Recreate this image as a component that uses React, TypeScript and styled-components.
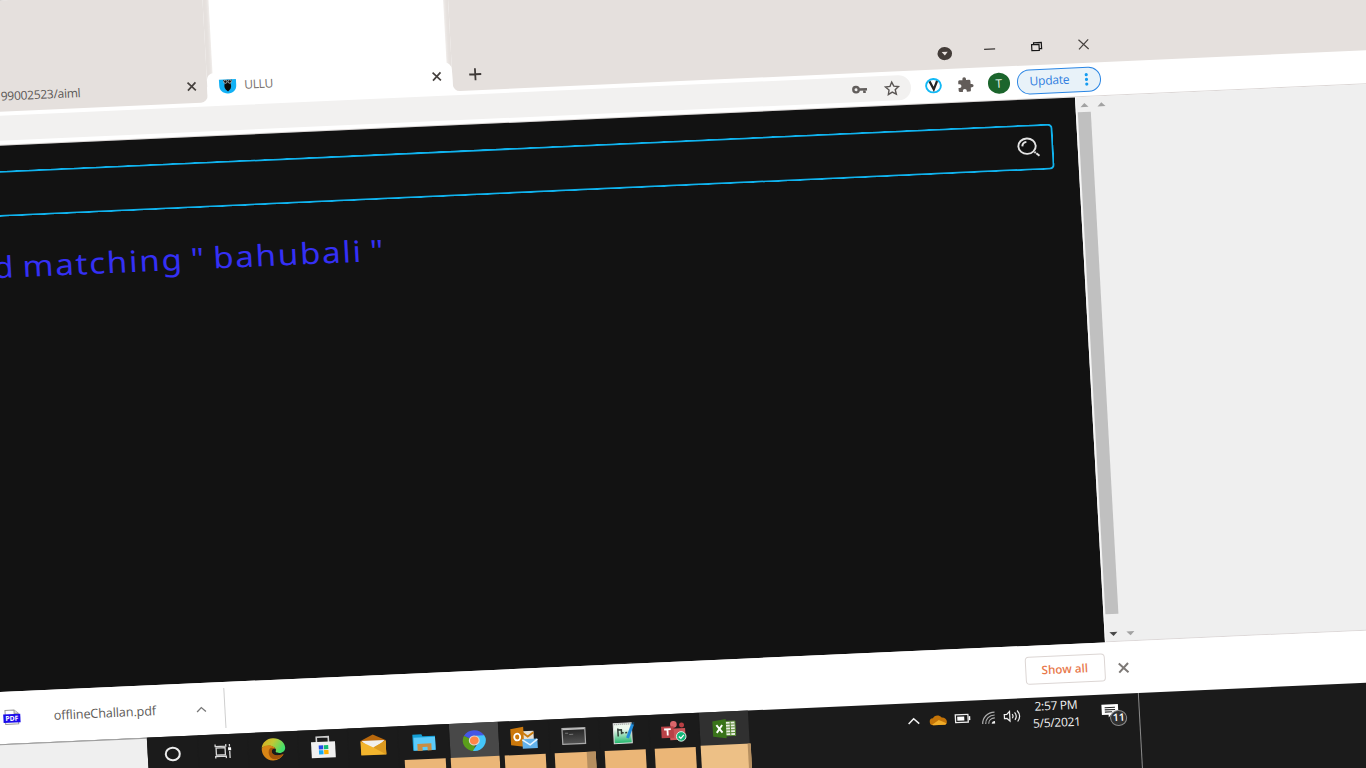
import React from "react";
import styled, { createGlobalStyle } from "styled-components";

const Global = createGlobalStyle`
  html, body { margin: 0; padding: 0; width: 100%; height: 768px; overflow: hidden; background: #1b1b1b; }
  svg { display: block; flex: none; overflow: visible; }
`;

const Viewport = styled.main`
  width: 1366px;
  height: 768px;
  overflow: hidden;
  font-family: "Open Sans", "Noto Sans", sans-serif;
`;

/* The whole desktop is tilted: rows climb to the right, columns lean right on the way down. */
const Desktop = styled.div`
  display: flex;
  flex-direction: column;
  width: 1450px;
  height: 850px;
  background: #fff;
  transform-origin: 0 0;
  transform: matrix(1, -0.045, 0.055, 1, -60, 3.1);
`;

const Cell = styled.div<{ $w: number }>`
  display: flex;
  flex: none;
  align-items: center;
  justify-content: center;
  width: ${(p) => p.$w}px;
`;

/* ---------- tab strip ---------- */
const TabStrip = styled.header`
  display: flex;
  flex: none;
  height: 111px;
  background: #fff;
`;

const IdleTab = styled.div`
  box-sizing: border-box;
  display: flex;
  align-items: flex-end;
  justify-content: flex-end;
  width: 262px;
  height: 111px;
  padding: 0 10.5px 2px 0;
  background: #e5e0dd;
  border-bottom-right-radius: 7px;
`;

const IdleTitle = styled.span`
  width: 75px;
  margin: 0 111px 4.5px 0;
  font-size: 12px;
  line-height: 18px;
  letter-spacing: -0.28px;
  color: #5a5654;
  white-space: nowrap;
`;

const ActiveColumn = styled.div`
  display: flex;
  flex-direction: column;
  width: 245px;
  background: linear-gradient(#e5e0dd 96px, #fff 96px);
`;

const Glow = styled.div`
  height: 94px;
  margin: 0 5.5px -12px 6px;
  background: #fff;
  box-shadow: 0 0 3px 1px #f4f1ef;
`;

const ActiveTab = styled.div`
  position: relative;
  box-sizing: border-box;
  display: flex;
  align-items: center;
  height: 29px;
  padding: 0 11.5px 2px 12px;
  background: #fff;
  border-radius: 7px 7px 0 0;
`;

const ActiveTitle = styled.span`
  flex: 1;
  margin: 0 0 1px 8px;
  font-size: 12px;
  line-height: 16px;
  letter-spacing: -0.3px;
  color: #77716e;
`;

const StripRest = styled.div`
  box-sizing: border-box;
  display: flex;
  flex: 1;
  align-items: flex-end;
  height: 111px;
  padding-bottom: 4px;
  background: #e5e0dd;
  border-bottom-left-radius: 7px;
`;

const StripCell = styled(Cell)<{ $lift?: number }>`
  height: 24px;
  margin-bottom: ${(p) => p.$lift ?? 0}px;
`;

/* ---------- toolbar ---------- */
const Toolbar = styled.div`
  box-sizing: border-box;
  display: flex;
  flex: none;
  align-items: center;
  height: 33.5px;
  border-bottom: 1px solid #dcd7d6;
`;

const Omnibox = styled.div`
  box-sizing: border-box;
  display: flex;
  align-items: center;
  justify-content: flex-end;
  gap: 17px;
  width: 963.5px;
  height: 25px;
  margin-right: 14px;
  padding-right: 11px;
  background: #f2f1f0;
  border-radius: 0 13px 13px 0;
`;

const PuzzleCell = styled(Cell)`
  box-sizing: border-box;
  padding-left: 3px;
`;

const Avatar = styled.div`
  display: flex;
  align-items: center;
  justify-content: center;
  width: 22.5px;
  height: 21px;
  margin-right: 6.5px;
  border-radius: 50%;
  background: #1b652c;
  color: #e8f4ea;
  font-size: 12px;
`;

const UpdateButton = styled.div`
  box-sizing: border-box;
  display: flex;
  align-items: center;
  justify-content: space-between;
  width: 84px;
  height: 25.5px;
  padding: 0 12px 0 12px;
  border: 1px solid #2b86e4;
  border-radius: 13px;
  background: #e8f2f9;
  color: #2f7de0;
  font-size: 12px;
  line-height: 16px;
  letter-spacing: -0.2px;
`;

/* ---------- page ---------- */
const Body = styled.section`
  box-sizing: border-box;
  display: flex;
  flex: none;
  height: 545.7px;
  background: #efefef;
  border-bottom: 1px solid #ddd8d8;
`;

const Page = styled.div`
  display: flex;
  flex-direction: column;
  width: 1127px;
  height: 545.7px;
  background: #121212;
`;

const SearchBox = styled.div`
  box-sizing: border-box;
  display: flex;
  align-items: center;
  justify-content: flex-end;
  width: 1103px;
  height: 46px;
  margin-top: 25.3px;
  padding-right: 12.5px;
  border: 2px solid #10b3ee;
  border-left: 0;
  border-radius: 0 5px 5px 0;
`;

const Message = styled.p`
  width: 430.5px;
  margin: 30.5px 0 0;
  color: #3530f5;
  font-family: "Noto Sans", sans-serif;
  font-size: 29.5px;
  line-height: 40px;
  letter-spacing: 1.5px;
  word-spacing: -2.8px;
  text-align: right;
  white-space: pre;
  transform: scaleX(1.125);
  transform-origin: 100% 50%;
`;

const ScrollTrack = styled.div`
  box-sizing: border-box;
  display: flex;
  flex-direction: column;
  align-items: center;
  justify-content: space-between;
  width: 17.5px;
  height: 545px;
  padding: 6px 0 5.5px;
`;

const InnerTrack = styled(ScrollTrack)`
  border-left: 1px solid #fafafa;
`;

const Thumb = styled.div`
  flex: 1;
  width: 13.3px;
  margin: 5px 1px 18.5px 0;
  background: #c0c0c0;
`;

/* ---------- downloads ---------- */
const Downloads = styled.div`
  display: flex;
  flex: none;
  align-items: center;
  height: 51.6px;
  background: #fff;
`;

const FileIcon = styled.div`
  margin-left: 23.5px;
`;

const FileName = styled.span`
  width: 104px;
  margin: 1px 0 0 34px;
  color: #5d5a58;
  font-size: 12.6px;
  line-height: 18px;
  letter-spacing: -0.1px;
  white-space: nowrap;
`;

const FileMenu = styled.div`
  margin: 2px 0 0 38px;
`;

const Divider = styled.div`
  width: 1px;
  height: 40px;
  margin-left: 18.5px;
  background: #cfcfcf;
`;

const ShowAll = styled.div`
  box-sizing: border-box;
  display: flex;
  align-items: center;
  justify-content: center;
  width: 80px;
  height: 28.5px;
  margin: 0 13px 2px 799.5px;
  border: 1px solid #dcd6d4;
  border-radius: 4px;
  color: #e8794c;
  font-size: 11.6px;
  font-weight: 600;
`;

/* ---------- taskbar ---------- */
const TaskRow = styled.div`
  display: flex;
  flex: 1;
  background: #1b1b1b;
`;

const Blank = styled.div`
  box-sizing: border-box;
  width: 166px;
  background: #efefef;
  border-top: 1px solid #9b9b9b;
`;

const Slot = styled.div<{ $bg?: string }>`
  box-sizing: border-box;
  display: flex;
  flex-direction: column;
  align-items: center;
  width: 50.1px;
  border-left: 1px solid #1b1b1b;
  background: linear-gradient(${(p) => p.$bg ?? "#1b1b1b"} 36px, #1b1b1b 36px);
`;

const SlotIcon = styled.div<{ $h?: number }>`
  display: flex;
  flex: none;
  align-items: center;
  justify-content: center;
  height: ${(p) => p.$h ?? 34.5}px;
`;

const Underline = styled.div<{ $w: number; $shade?: number; $c?: string }>`
  box-sizing: border-box;
  flex: 1;
  align-self: ${(p) => (p.$w > 45 ? "flex-start" : "center")};
  width: ${(p) => p.$w}px;
  margin-left: ${(p) => (p.$w > 45 ? 0 : 1)}px;
  border-right: ${(p) => p.$shade ?? 0}px solid #b68f60;
  background: ${(p) => p.$c ?? "#ebb677"};
`;

const Tray = styled.div`
  display: flex;
  align-items: center;
  height: 35.5px;
  margin-left: 154px;
`;

const Clock = styled.div`
  width: 55px;
  margin: 0 0 0 6px;
  color: #f2f2f2;
  font-size: 12px;
  line-height: 16.2px;
  letter-spacing: -0.3px;
  text-align: center;
  white-space: nowrap;
`;

const Notice = styled.div`
  position: relative;
  width: 24px;
  height: 22px;
  margin: 7px 0 0 18px;
`;

const Badge = styled.div`
  position: absolute;
  left: 8px;
  top: 6px;
  box-sizing: border-box;
  width: 17px;
  height: 15.5px;
  border: 1px solid #8a8a8a;
  border-radius: 50%;
  background: #303030;
  color: #fff;
  font-size: 10.5px;
  font-weight: 600;
  line-height: 13.5px;
  text-align: center;
`;

const DesktopEdge = styled.div`
  width: 1px;
  margin-left: 12.5px;
  background: #8b8b8b;
`;

const Cross = ({ s = 9, w = 1.7, c = "#46413e" }: { s?: number; w?: number; c?: string }) => (
  <svg width={s} height={s} viewBox="0 0 10 10" stroke={c} strokeWidth={(w * 10) / s}>
    <path d="M.6.6 9.4 9.4M9.4.6.6 9.4" />
  </svg>
);

const Arrow = ({ down, c = "#a2a2a2" }: { down?: boolean; c?: string }) => (
  <svg width="8" height="4" viewBox="0 0 8 4" fill={c}>
    <path d={down ? "M0 0h8L4 4z" : "M0 4h8L4 0z"} />
  </svg>
);

const Chevron = ({ c, w = 12 }: { c: string; w?: number }) => (
  <svg width={w} height={w / 2} viewBox="0 0 12 6" fill="none" stroke={c} strokeWidth="1.6">
    <path d="m.7 5.6 5.3-5 5.3 5" />
  </svg>
);

const Owl = () => (
  <svg width="17" height="14" viewBox="0 0 17 14">
    <path d="M0 0h17v6c0 5-3.500 8-8.500 8S0 11 0 6z" fill="#12b1f5" />
    <path d="M4 .5h9l-1.500 4c.8 2.300.2 4.500-1 5.700l-2 1.800-2-1.800C5.300 9 4.700 6.800 5.500 4.500z" fill="#0b0b0b" />
    <g fill="#111" stroke="#bdc9cf" strokeWidth=".8">
      <circle cx="6.300" cy="2.200" r="1.700" />
      <circle cx="10.700" cy="2.200" r="1.700" />
    </g>
  </svg>
);

const Key = () => (
  <svg width="15" height="9" viewBox="0 0 15 9" fill="none" stroke="#625e5c">
    <circle cx="4" cy="4.500" r="2.700" strokeWidth="2.400" />
    <path d="M7 4.500h8M12.300 4.500v3.700" strokeWidth="2.600" />
  </svg>
);

const Star = () => (
  <svg width="16" height="15" viewBox="0 0 16 15" fill="none" stroke="#5a5654" strokeWidth="1.400">
    <path d="m8 1.500 1.900 4.200 4.600.5-3.400 3.100.9 4.500-4-2.300-4 2.300.9-4.500L1.500 6.200l4.600-.5z" />
  </svg>
);

const VIcon = () => (
  <svg width="17" height="16" viewBox="0 0 17 16" fill="none">
    <ellipse cx="8.500" cy="8" rx="7.400" ry="6.700" fill="#fff" stroke="#12b9f6" strokeWidth="1.900" />
    <path d="M4.800 3.500 8.600 11.600l3.700-8.100" stroke="#252525" strokeWidth="2.200" />
  </svg>
);

const Puzzle = () => (
  <svg width="15.500" height="14.500" viewBox="1.500 1 21.500 21" preserveAspectRatio="none" fill="#625c59">
    <path d="M20.500 11H19V7a2 2 0 0 0-2-2h-4V3.500a2.500 2.500 0 0 0-5 0V5H4a2 2 0 0 0-2 2v3.800h1.500a2.700 2.700 0 0 1 0 5.400H2V20a2 2 0 0 0 2 2h3.800v-1.500a2.700 2.700 0 0 1 5.400 0V22H17a2 2 0 0 0 2-2v-4h1.500a2.500 2.500 0 0 0 0-5z" />
  </svg>
);

const Magnifier = () => (
  <svg width="22" height="19" viewBox="0 0 22 19" fill="none" stroke="#e4e4e4">
    <ellipse cx="9.500" cy="8.500" rx="8.700" ry="7.700" strokeWidth="1.900" />
    <path d="M4.800 8.500c.2-2.400 2-4.100 4.300-4.300M16.600 14.600l1.200 1M18.400 16l3 2.600" strokeWidth="2" />
  </svg>
);

const Pdf = () => (
  <svg width="17" height="15" viewBox="0 0 17 15">
    <path d="M2 .5h9l4 3.500v10.500H2z" fill="#fff" stroke="#989898" />
    <path d="M11 .5V4h4" fill="#ddd" stroke="#989898" />
    <path d="M0 4.500h17v8.500H0z" fill="#1a0bea" />
    <text x="8.500" y="11.200" textAnchor="middle" fontSize="6.800" fontWeight="700" fill="#fff" fontFamily="Open Sans, sans-serif">PDF</text>
  </svg>
);

const TaskView = () => (
  <svg width="17" height="14" viewBox="0 0 17 14" fill="none" stroke="#dadada" strokeWidth="1.300">
    <path d="M1.500 3.500h9v7h-9zM.7 0v2h10.600V0M.7 14v-2h10.600v2M15 0v2.500M15 7v7" />
    <path d="M13.500 3.300h3v3h-3z" fill="#fff" stroke="none" />
  </svg>
);

const Edge = () => (
  <svg width="25" height="23" viewBox="0 0 26 24">
    <defs>
      <linearGradient id="edgeTop" x1="0" y1="0" x2="1" y2=".5">
        <stop offset="0" stopColor="#dfa619" />
        <stop offset=".5" stopColor="#c0c936" />
        <stop offset="1" stopColor="#43e06b" />
      </linearGradient>
    </defs>
    <path d="M1 10C2 4 7 .2 13 .2c7.500 0 12.500 5 12.500 10.300 0 3.500-3 5.500-6 5.500-3.500 0-5-1.500-3.500-3.200C15 8 7 6 1 10z" fill="url(#edgeTop)" />
    <path d="M1 10.500C4 6 13 6.500 15.500 11.500c-3-1.500-5 .5-4.500 3 .5 3.500 5 5.500 12.500 3C21 21.500 17 23.500 12.500 23.500 5 23.500.5 17 1 10.500z" fill="#d88515" />
    <path d="M8 15c0-4 3-6 6-4-2 .5-3 2-2.500 4 1 3 6 4.500 12 2-1.700 3.300-5 5.200-8.500 5.300C10.500 22.500 8 19 8 15z" fill="#a3540b" />
  </svg>
);

const Store = () => (
  <svg width="25" height="23" viewBox="0 0 25 23">
    <path d="M6 7V1.200h12V7" fill="none" stroke="#cfcfcf" strokeWidth="1.600" />
    <path d="M.5 6h24v16H.5z" fill="#f0f0f0" />
    <path d="M8 9.500h4.400v4.100H8z" fill="#244be8" />
    <path d="M13.100 9.500h4.400v4.100h-4.400z" fill="#12bb78" />
    <path d="M8 14.400h4.400v4.200H8z" fill="#16a9f3" />
    <path d="M13.100 14.400h4.400v4.200h-4.400z" fill="#ffb000" />
  </svg>
);

const Mail = () => (
  <svg width="25" height="21" viewBox="0 0 25 21">
    <path d="M0 6 12.500 0 25 6v14H0z" fill="#b9680c" />
    <path d="M1 6h23l-9 8H9z" fill="#f0efed" />
    <path d="M0 6.500 12.500 13 25 6.500V20.500H0z" fill="#f2b42d" />
    <path d="M25 6.500V20.500L12.500 13z" fill="#dc9a20" />
  </svg>
);

const Folder = () => (
  <svg width="23" height="17" viewBox="0 0 23 17">
    <path d="M0 0h9l1 2h12.500v14H0z" fill="#139ed5" />
    <path d="M1 3h21.500v13H1z" fill="#5ccbfa" />
    <path d="M4.500 16.500V9.500h14v7h-4v-3.800h-5v3.800z" fill="#c98d43" />
  </svg>
);

const Chrome = () => (
  <svg width="23" height="21" viewBox="0 0 24 24" preserveAspectRatio="none">
    <path d="M12 24A12 12 0 0 1 1.600 6L12 12z" fill="#5a9e1b" />
    <path d="M10 23.800 16.500 14 14 6h8.400A12 12 0 0 1 10 23.800z" fill="#44c6fa" />
    <path d="M12 12 1.600 6a12 12 0 0 1 20.800 0.500H12z" fill="#4557e5" />
    <circle cx="12" cy="12" r="5.700" fill="#e1d8d5" />
    <circle cx="12" cy="12" r="4.500" fill="#ff8547" />
  </svg>
);

const Outlook = () => (
  <svg width="27" height="22" viewBox="0 0 27 22">
    <path d="M12 4.500h11v9H12z" fill="#e5e0d7" />
    <path d="m12 6 5 4 6-4" fill="none" stroke="#ca7b0e" strokeWidth="1.800" />
    <path d="M0 2 13 0v20L0 18z" fill="#cb780b" />
    <ellipse cx="6.500" cy="10" rx="3" ry="3.400" fill="none" stroke="#fff" strokeWidth="1.800" />
    <path d="M11.500 12.500h15v9.500h-15z" fill="#62b1ea" />
    <path d="m11.500 13 7.500 5.500 7.500-5.500" fill="none" stroke="#e6f4ff" strokeWidth="1.500" />
  </svg>
);

const Terminal = () => (
  <svg width="24" height="17" viewBox="0 0 24 17">
    <defs>
      <linearGradient id="term" x1="0" y1="0" x2="0" y2="1">
        <stop offset="0" stopColor="#222" />
        <stop offset="1" stopColor="#535353" />
      </linearGradient>
    </defs>
    <path d="M.6.600h22.800v15.800H.600z" fill="url(#term)" stroke="#a9a9a9" strokeWidth="1.200" />
    <path d="M1 1.500h22" stroke="#c2c2c2" strokeWidth="1.400" />
    <path d="M3.500 5.500h3M7.500 6.800h4" stroke="#777" strokeWidth="1" />
  </svg>
);

const Note = () => (
  <svg width="23" height="22" viewBox="0 0 23 22">
    <defs>
      <linearGradient id="note" x1="0" y1="0" x2="0" y2="1">
        <stop offset=".3" stopColor="#edf8ee" />
        <stop offset="1" stopColor="#1db56a" />
      </linearGradient>
    </defs>
    <path d="M1 1h18v20H1z" fill="url(#note)" stroke="#ddd" />
    <path d="M2 2h17" stroke="#9c9c9c" strokeWidth="1.300" strokeDasharray="1 1" />
    <path d="M5.300 6v8M5.300 7.500h3.500V12M8.500 10.500h2.500M12.500 10.500h2" fill="none" stroke="#2e3d35" strokeWidth="1.500" />
    <path d="M20.500 2 14.500 16" stroke="#218cdb" strokeWidth="3" />
    <path d="m21.500.3-1.200 2.400" stroke="#173c55" strokeWidth="2" />
  </svg>
);

const Teams = () => (
  <svg width="26" height="21" viewBox="0 0 26 22">
    <circle cx="13" cy="3.500" r="3.500" fill="#d9666a" />
    <circle cx="21.500" cy="4.500" r="2.600" fill="#b93f43" />
    <path d="M8 8h17v6c0 4-2 6-6 6H9z" fill="#cc5558" />
    <path d="M0 5.500h13v12H0z" fill="#b94247" />
    <path d="M3 8.500h7M6.500 8.500V15" stroke="#fff" strokeWidth="1.900" />
    <circle cx="20.500" cy="16.500" r="5" fill="#12b778" stroke="#e3eee8" strokeWidth="1" />
    <path d="m18 16.500 2 2 3.300-3.500" fill="none" stroke="#fff" strokeWidth="1.300" />
  </svg>
);

const Excel = () => (
  <svg width="23" height="20" viewBox="0 0 24 20">
    <path d="M13 2.500h10.500v15H13z" fill="#e9efe4" stroke="#50852c" />
    <path d="M14 5.500h9M14 8.500h9M14 11.500h9M14 14.500h9M18.500 3v14" stroke="#55832f" strokeWidth="1" />
    <path d="M0 2 14 0v20L0 18z" fill="#39731a" />
    <path d="m4 6 6 8M10 6l-6 8" stroke="#fff" strokeWidth="2" />
  </svg>
);

const Cortana = () => (
  <svg width="18" height="15" viewBox="0 0 18 15">
    <ellipse cx="8" cy="7.500" rx="7" ry="6.200" fill="none" stroke="#ececec" strokeWidth="2" />
  </svg>
);

const apps: { icon: React.ReactNode; bar?: number; shade?: number; bg?: string; tall?: boolean }[] = [
  { icon: <Cortana /> },
  { icon: <TaskView /> },
  { icon: <Edge /> },
  { icon: <Store /> },
  { icon: <Mail /> },
  { icon: <Folder />, bar: 41 },
  { icon: <Chrome />, bar: 49.5, bg: "#484848" },
  { icon: <Outlook />, bar: 41 },
  { icon: <Terminal />, bar: 41, shade: 9 },
  { icon: <Note />, bar: 41 },
  { icon: <Teams />, bar: 41 },
  { icon: <Excel />, bar: 50, shade: 3, bg: "#303030", tall: true },
];

export default function App() {
  return (
    <Viewport>
      <Global />
      <Desktop>
        <TabStrip>
          <IdleTab>
            <IdleTitle>99002523/aiml</IdleTitle>
            <StripCell $w={10} $lift={2.3}><Cross /></StripCell>
          </IdleTab>
          <ActiveColumn>
            <Glow />
            <ActiveTab>
              <Owl />
              <ActiveTitle>ULLU</ActiveTitle>
              <Cross />
            </ActiveTab>
          </ActiveColumn>
          <StripRest>
            <StripCell $w={45.5}>
              <svg width="12" height="12" viewBox="0 0 12 12" stroke="#3f3a38" strokeWidth="1.800"><path d="M6 0v12M0 6h12" /></svg>
            </StripCell>
            <StripCell $w={423.5} />
            <StripCell $w={46}>
              <svg width="15" height="13" viewBox="0 0 15 13"><ellipse cx="7.500" cy="6.500" rx="7.300" ry="6.500" fill="#433c38" /><path d="M4.500 4.800h6l-3 3.700z" fill="#e9e3df" /></svg>
            </StripCell>
            <StripCell $w={44} $lift={2}>
              <svg width="11" height="2" viewBox="0 0 11 2"><path d="M0 1h11" stroke="#3b3735" strokeWidth="1.300" /></svg>
            </StripCell>
            <StripCell $w={50} $lift={3}>
              <svg width="11" height="9" viewBox="0 0 11 9" fill="none" stroke="#161616" strokeWidth="1.200"><path d="M.600 2.500h7.400v6H.600zM2.700 2.500V.600h7.700v6.200H8" /></svg>
            </StripCell>
            <StripCell $w={44} $lift={2.5}><Cross s={11} w={1.2} /></StripCell>
          </StripRest>
        </TabStrip>

        <Toolbar>
          <Omnibox>
            <Key />
            <Star />
          </Omnibox>
          <VIcon />
          <PuzzleCell $w={46}><Puzzle /></PuzzleCell>
          <Avatar>T</Avatar>
          <UpdateButton>
            Update
            <svg width="3" height="13" viewBox="0 0 3 13" fill="#159bf0"><circle cx="1.500" cy="1.800" r="1.600" /><circle cx="1.500" cy="6.500" r="1.600" /><circle cx="1.500" cy="11.200" r="1.600" /></svg>
          </UpdateButton>
        </Toolbar>

        <Body>
          <Page>
            <SearchBox><Magnifier /></SearchBox>
            <Message>{'d matching " bahubali "'}</Message>
          </Page>
          <InnerTrack>
            <Arrow />
            <Thumb />
            <Arrow down c="#484848" />
          </InnerTrack>
          <ScrollTrack>
            <Arrow />
            <Arrow down />
          </ScrollTrack>
        </Body>

        <Downloads>
          <FileIcon><Pdf /></FileIcon>
          <FileName>offlineChallan.pdf</FileName>
          <FileMenu><Chevron c="#777" w={10} /></FileMenu>
          <Divider />
          <ShowAll>Show all</ShowAll>
          <Cross s={10.5} w={2} c="#7d7976" />
        </Downloads>

        <TaskRow>
          <Blank />
          {apps.map((a, i) => (
            <Slot key={i} $bg={a.bg}>
              <SlotIcon $h={a.tall ? 33.5 : undefined}>{a.icon}</SlotIcon>
              {a.bar && <Underline $w={a.bar} $shade={a.shade} $c={a.tall ? "#edc086" : undefined} />}
            </Slot>
          ))}
          <Tray>
            <Cell $w={22}><Chevron c="#f0f0f0" w={12} /></Cell>
            <Cell $w={26}>
              <svg width="17" height="10" viewBox="0 0 17 10"><path d="M3.500 10a3.500 3.500 0 0 1-.3-7C4.500.200 9-1 12 2.500c3 0 5 2 5 4.500 0 2-1.500 3-3 3z" fill="#c47408" /><path d="M3.500 10a3 3 0 0 1-1.500-.5L9 5l7.500 3.500c-.6 1-1.500 1.500-2.500 1.500z" fill="#f0ac28" /></svg>
            </Cell>
            <Cell $w={24}>
              <svg width="16" height="9" viewBox="0 0 16 9"><path d="M.700.700h12.600v7.600H.700z" fill="none" stroke="#ededed" strokeWidth="1.300" /><path d="M2.500 2.500h7v4h-7zM14 2.500h1.500v4H14z" fill="#fff" /></svg>
            </Cell>
            <Cell $w={26}>
              <svg width="13" height="12" viewBox="0 0 13 12" fill="none" stroke="#adadad" strokeWidth="1.200"><path d="M.600 12C.600 5.500 6 .600 13 .600M3.600 12c0-5 4-8.500 9.400-8.500M6.600 12c0-3.400 2.800-5.600 6.400-5.600" /><path d="M9.600 12c0-1.600 1.400-2.600 3.400-2.600V12z" fill="#eee" stroke="none" /></svg>
            </Cell>
            <Cell $w={22}>
              <svg width="17" height="13" viewBox="0 0 17 13" fill="none" stroke="#f0f0f0" strokeWidth="1.200"><path d="M.600 4.500h2.500L6 1.700v9.600L3.100 8.500H.600zM8.500 4.500q1.500 2 0 4M11 2.700q3 3.800 0 7.600M13.600 1q4.500 5.500 0 11" /></svg>
            </Cell>
            <Clock>2:57 PM<br />5/5/2021</Clock>
            <Notice>
              <svg width="16.500" height="14" viewBox="0 0 16 15" preserveAspectRatio="none"><path d="M0 0h16v11H9l-2.500 3V11H0z" fill="#fff" /><path d="M3 3.300h10M3 5.700h10M3 8.100h7" stroke="#252525" strokeWidth="1.100" /></svg>
              <Badge>11</Badge>
            </Notice>
          </Tray>
          <DesktopEdge />
        </TaskRow>
      </Desktop>
    </Viewport>
  );
}
